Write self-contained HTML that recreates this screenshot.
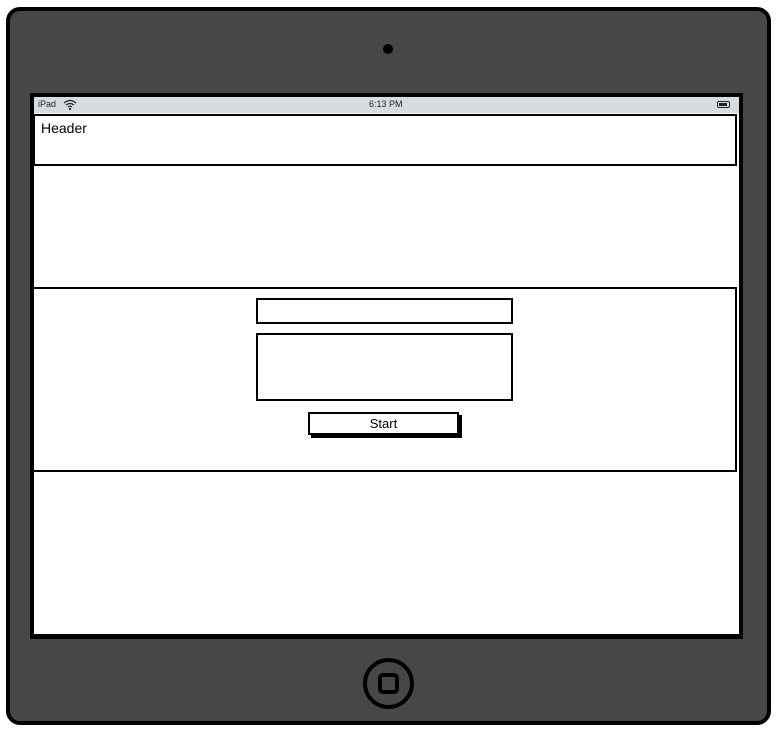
<!DOCTYPE html>
<html><head><style>
body{margin:0;width:776px;height:736px;background:#fff;position:relative;overflow:hidden;font-family:"Liberation Sans",sans-serif}
div{position:absolute;box-sizing:border-box}
</style></head><body>
<div style="left:6px;top:7px;width:765px;height:718px;background:#474747;border:4px solid #000;border-radius:14px"></div>
<div style="left:383px;top:44px;width:10px;height:10px;border-radius:50%;background:#000"></div>
<div style="left:30px;top:93px;width:713px;height:546px;background:#000"></div>
<div style="left:34px;top:97px;width:705px;height:537px;background:#fff"></div>
<div style="left:34px;top:97px;width:705px;height:16px;background:#d9dcdf;font-size:9px;line-height:15px">
<span style="position:absolute;left:4px;color:#222">iPad</span>
<svg style="position:absolute;left:29px;top:2px" width="14" height="11" viewBox="0 0 14 11"><path d="M1 4Q7-1 13 4M3 6Q7 3 11 6M5 8Q7 6.5 9 8" stroke="#222" stroke-width="1.3" fill="none"/><circle cx="7" cy="10" r="1.1" fill="#222"/></svg>
<span style="position:absolute;left:335px;color:#222">6:13 PM</span>
<div style="left:683px;top:4px;width:13px;height:7px;border:1.3px solid #222;border-radius:2px"><div style="left:1px;top:1px;width:8px;height:3px;background:#222"></div></div>
</div>
<div style="left:33px;top:114px;width:704px;height:52px;border:2px solid #000;font-size:14px;padding:4px 0 0 6px">Header</div>
<div style="left:31px;top:287px;width:706px;height:185px;border:2px solid #000"></div>
<div style="left:256px;top:298px;width:257px;height:26px;border:2px solid #000"></div>
<div style="left:256px;top:333px;width:257px;height:68px;border:2px solid #000"></div>
<div style="left:311px;top:415px;width:151px;height:23px;background:#000"></div>
<div style="left:308px;top:412px;width:151px;height:23px;border:2px solid #000;background:#fff;font-size:13px;text-align:center;line-height:19px">Start</div>
<div style="left:363px;top:658px;width:51px;height:51px;border:4px solid #000;border-radius:50%"></div>
<div style="left:378px;top:673px;width:21px;height:21px;border:4px solid #000;border-radius:5px"></div>
</body></html>
